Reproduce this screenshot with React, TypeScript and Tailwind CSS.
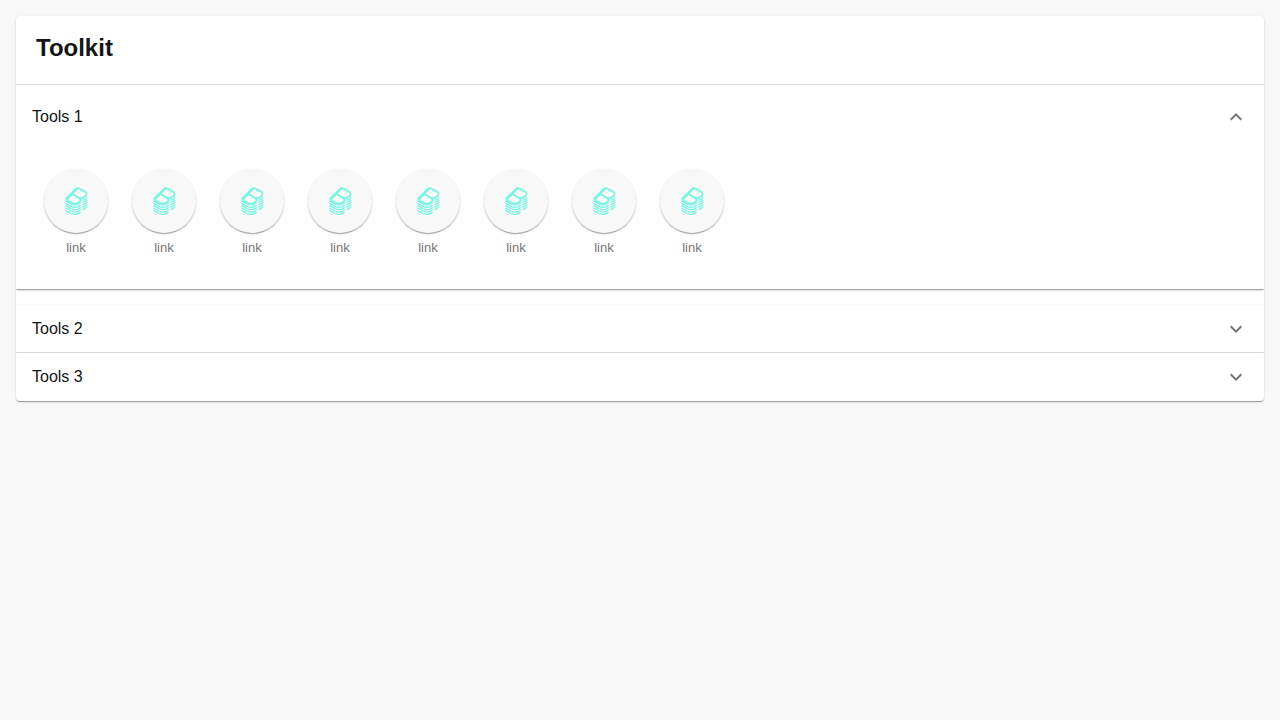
import { useState, type ReactNode } from "react";

const raised =
  "shadow-[0_2px_1px_-1px_rgba(0,0,0,0.2),0_1px_1px_0_rgba(0,0,0,0.14),0_1px_3px_0_rgba(0,0,0,0.12)]";

const layers = [4, 11, 18, 25, 32];

function StackIcon() {
  return (
    <svg className="h-[38px] w-8" viewBox="0 0 96 114" fill="none" stroke="#78f4e3" aria-hidden="true">
      <g strokeWidth="5.5" strokeLinejoin="round">
        <path d="M18 53 L54 18 L79 31 Q80 41 72 46 Q64 51 56 47 L37 36" />
        <path d="M18 53 L37 36 M56 47 Q64 52 60 58 Q50 68 36 63 L18 53" />
        <path d="M17 51 L52 17" />
      </g>
      <g strokeWidth="4">
        {layers.map((y) => (
          <path key={y} d={`M16 ${y + 53} L33 ${y + 62} Q51 ${y + 70} 62 ${y + 58}`} />
        ))}
        {layers.map((y) => (
          <path key={y} d={`M67 ${y + 51} Q77 ${y + 49} 81 ${y + 42}`} />
        ))}
      </g>
    </svg>
  );
}

function ToolLink() {
  return (
    <a href="#link" className="flex w-16 flex-col items-center gap-1 text-[13px] leading-5 text-[#757575]">
      <span className={`flex size-16 items-center justify-center rounded-full bg-[#f8f8f8] ${raised}`}>
        <StackIcon />
      </span>
      <span className="pt-px">link</span>
    </a>
  );
}

interface SectionProps {
  title: string;
  open: boolean;
  last?: boolean;
  onToggle: () => void;
  children?: ReactNode;
}

function Section({ title, open, last = false, onToggle, children }: SectionProps) {
  return (
    <section
      className={`bg-white ${raised} ${open ? "mb-4" : ""} ${
        !open && !last ? "border-b border-[#dedede]" : ""
      }`}
    >
      <h2>
        <button
          type="button"
          aria-expanded={open}
          onClick={onToggle}
          className={`flex w-full items-center justify-between px-4 text-left text-base ${
            open ? "h-16" : last ? "h-12" : "h-[47px]"
          }`}
        >
          {title}
          <svg
            className={`size-6 text-[#757575] ${open ? "rotate-180" : ""}`}
            viewBox="0 0 24 24"
            fill="currentColor"
            aria-hidden="true"
          >
            <path d="M16.59 8.59 12 13.17 7.41 8.59 6 10l6 6 6-6z" />
          </svg>
        </button>
      </h2>
      {open && children}
    </section>
  );
}

export default function App() {
  const [open, setOpen] = useState("Tools 1");
  const toggle = (title: string) => setOpen(open === title ? "" : title);
  const titles = ["Tools 1", "Tools 2", "Tools 3"];

  return (
    <div className="min-h-screen bg-[#f8f8f8] p-4 font-['Liberation_Sans',Arial,sans-serif] text-[#151515]">
      <main className={`overflow-hidden rounded bg-white ${raised}`}>
        <header className="border-b border-[#e0e0e0] px-5 pt-4 pb-5">
          <h1 className="text-2xl leading-8 font-bold">Toolkit</h1>
        </header>
        {titles.map((title, i) => (
          <Section
            key={title}
            title={title}
            open={open === title}
            last={i === titles.length - 1}
            onToggle={() => toggle(title)}
          >
            <div className="flex flex-wrap gap-6 px-7 pt-5 pb-[31px]">
              {Array.from({ length: 8 }, (_, n) => (
                <ToolLink key={n} />
              ))}
            </div>
          </Section>
        ))}
      </main>
    </div>
  );
}
